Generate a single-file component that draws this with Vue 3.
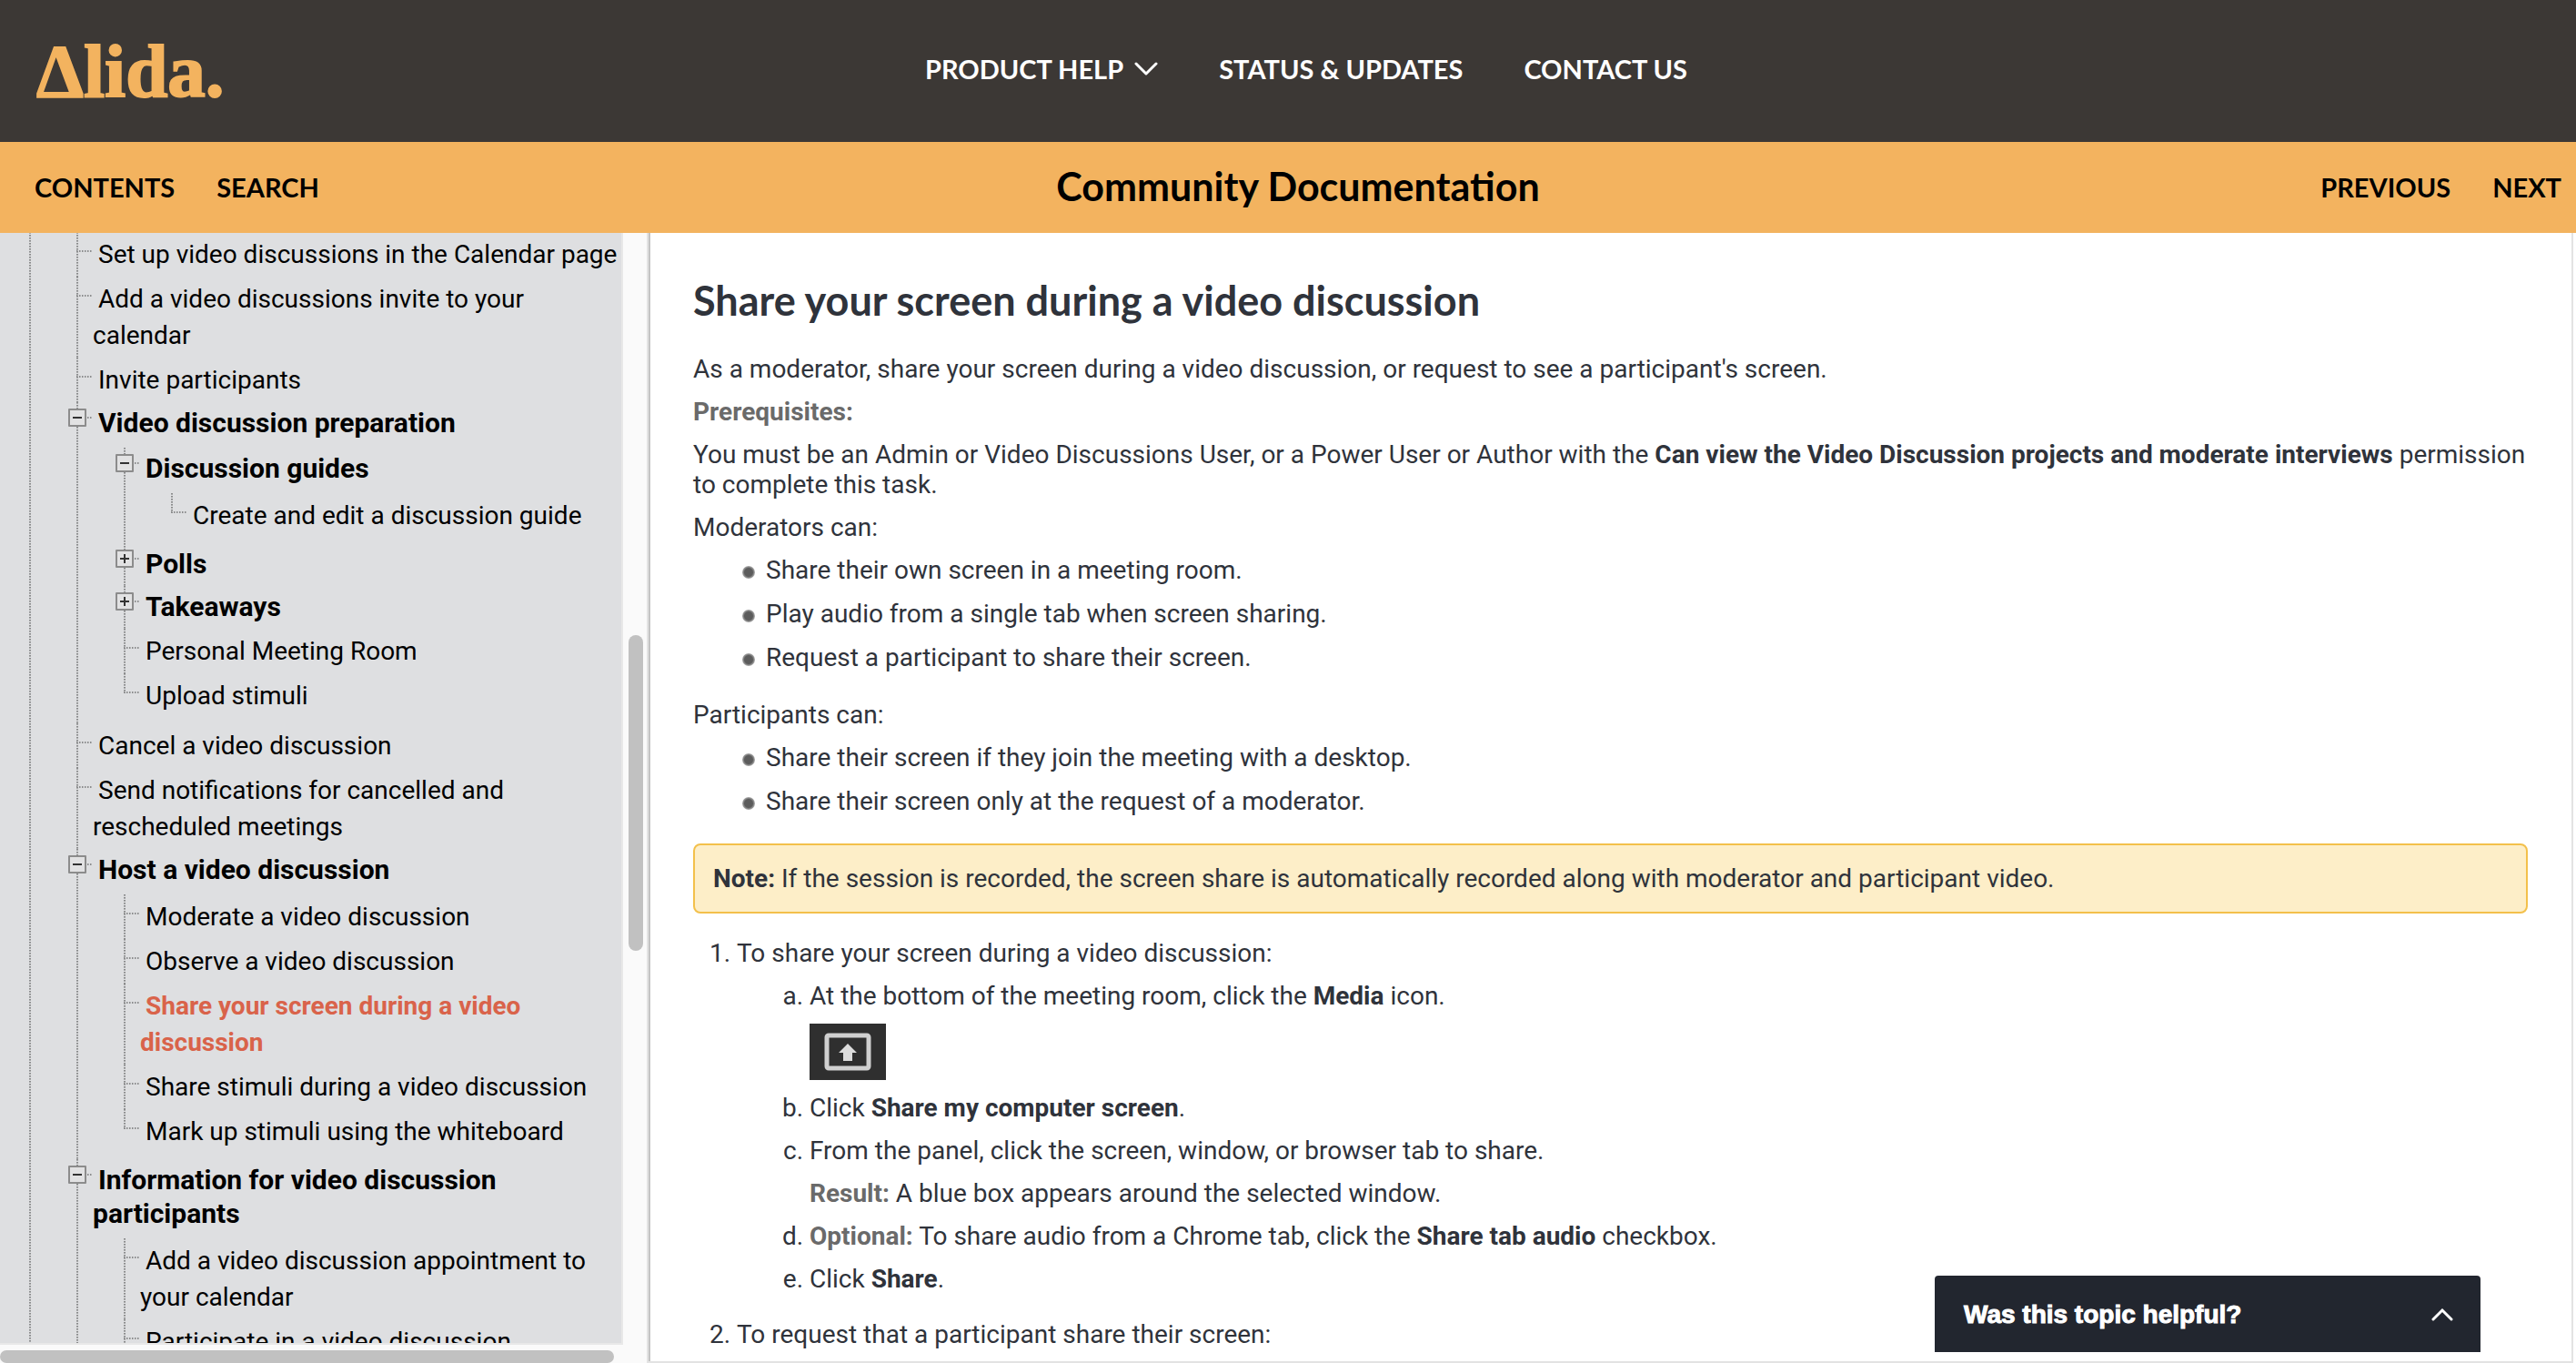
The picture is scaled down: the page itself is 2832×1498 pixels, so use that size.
<script setup>
import { ref } from 'vue'

const selected = ref('Share your screen during a video discussion')
const feedbackOpen = ref(false)

// Visible part of the contents tree: leaves are plain titles, folders carry children.
const tree = ref([
  { title: 'Set up video discussions in the Calendar page' },
  { title: 'Add a video discussions invite to your calendar' },
  { title: 'Invite participants' },
  {
    title: 'Video discussion preparation',
    open: true,
    children: [
      {
        title: 'Discussion guides',
        open: true,
        children: [{ title: 'Create and edit a discussion guide' }]
      },
      { title: 'Polls', open: false, children: [] },
      { title: 'Takeaways', open: false, children: [] },
      { title: 'Personal Meeting Room' },
      { title: 'Upload stimuli' }
    ]
  },
  { title: 'Cancel a video discussion' },
  { title: 'Send notifications for cancelled and rescheduled meetings' },
  {
    title: 'Host a video discussion',
    open: true,
    children: [
      { title: 'Moderate a video discussion' },
      { title: 'Observe a video discussion' },
      { title: 'Share your screen during a video discussion' },
      { title: 'Share stimuli during a video discussion' },
      { title: 'Mark up stimuli using the whiteboard' }
    ]
  },
  {
    title: 'Information for video discussion participants',
    open: true,
    more: true,
    children: [
      { title: 'Add a video discussion appointment to your calendar' },
      { title: 'Participate in a video discussion', more: true }
    ]
  }
])

const isLast = (list, index) => index === list.length - 1 && !list[index].more
</script>

<template>
  <div class="app">
    <header class="top">
      <a class="logo" href="#">Δlida.</a>
      <nav class="nav">
        <a href="#" class="nav-link">
          PRODUCT HELP
          <svg width="26" height="18" viewBox="0 0 26 18" aria-hidden="true">
            <path d="M2 3 L13 14 L24 3" fill="none" stroke="#fff" stroke-width="3" stroke-linecap="round" stroke-linejoin="round" />
          </svg>
        </a>
        <a href="#" class="nav-link">STATUS &amp; UPDATES</a>
        <a href="#" class="nav-link">CONTACT US</a>
      </nav>
    </header>

    <div class="bar">
      <div class="bar-group">
        <a href="#">CONTENTS</a>
        <a href="#">SEARCH</a>
      </div>
      <div class="bar-title">Community Documentation</div>
      <div class="bar-group end">
        <a href="#">PREVIOUS</a>
        <a href="#">NEXT</a>
      </div>
    </div>

    <div class="body">
      <aside class="sidebar">
        <div class="tree">
          <ul class="root">
            <li class="node trunk">
              <ul class="first">
                <li v-for="(a, i) in tree" :key="a.title" class="node" :class="{ last: isLast(tree, i), folder: a.children }">
                  <button v-if="a.children" class="toggle" :class="{ plus: !a.open }" :aria-label="a.title" @click="a.open = !a.open"></button>
                  <a href="#" class="label" :class="{ current: a.title === selected }" @click.prevent="selected = a.title">{{ a.title }}</a>
                  <ul v-if="a.children && a.open && a.children.length">
                    <li v-for="(b, j) in a.children" :key="b.title" class="node" :class="{ last: isLast(a.children, j), folder: b.children }">
                      <button v-if="b.children" class="toggle" :class="{ plus: !b.open }" :aria-label="b.title" @click="b.open = !b.open"></button>
                      <a href="#" class="label" :class="{ current: b.title === selected }" @click.prevent="selected = b.title">{{ b.title }}</a>
                      <ul v-if="b.children && b.open && b.children.length">
                        <li v-for="(c, k) in b.children" :key="c.title" class="node" :class="{ last: isLast(b.children, k) }">
                          <a href="#" class="label" :class="{ current: c.title === selected }" @click.prevent="selected = c.title">{{ c.title }}</a>
                        </li>
                      </ul>
                    </li>
                  </ul>
                </li>
              </ul>
            </li>
          </ul>
        </div>
        <div class="track-y"><span class="thumb-y"></span></div>
        <div class="track-x"><span class="thumb-x"></span></div>
      </aside>

      <main class="pane">
        <article class="topic">
          <h1>Share your screen during a video discussion</h1>
          <p>As a moderator, share your screen during a video discussion, or request to see a participant's screen.</p>
          <p><b class="tag">Prerequisites:</b></p>
          <p>You must be an Admin or Video Discussions User, or a Power User or Author with the <b>Can view the Video Discussion projects and moderate interviews</b> permission to complete this task.</p>
          <p>Moderators can:</p>
          <ul class="bullets">
            <li>Share their own screen in a meeting room.</li>
            <li>Play audio from a single tab when screen sharing.</li>
            <li>Request a participant to share their screen.</li>
          </ul>
          <p>Participants can:</p>
          <ul class="bullets">
            <li>Share their screen if they join the meeting with a desktop.</li>
            <li>Share their screen only at the request of a moderator.</li>
          </ul>
          <div class="note"><b>Note:</b> If the session is recorded, the screen share is automatically recorded along with moderator and participant video.</div>
          <ol class="steps">
            <li>
              <p>To share your screen during a video discussion:</p>
              <ol class="substeps">
                <li>
                  <p>At the bottom of the meeting room, click the <b>Media</b> icon.</p>
                  <svg class="media" width="84" height="62" viewBox="0 0 84 62" role="img" aria-label="Media">
                    <rect width="84" height="62" fill="#2f2f2f" />
                    <rect x="19" y="13" width="46" height="36" rx="2" fill="none" stroke="#d0d0d0" stroke-width="5" />
                    <path d="M42 22 L52 32 H47 V41 H37 V32 H32 Z" fill="#dcdcdc" />
                  </svg>
                </li>
                <li><p>Click <b>Share my computer screen</b>.</p></li>
                <li>
                  <p>From the panel, click the screen, window, or browser tab to share.</p>
                  <p><b class="tag">Result:</b> A blue box appears around the selected window.</p>
                </li>
                <li><p><b class="tag">Optional:</b> To share audio from a Chrome tab, click the <b>Share tab audio</b> checkbox.</p></li>
                <li><p>Click <b>Share</b>.</p></li>
              </ol>
            </li>
            <li><p>To request that a participant share their screen:</p></li>
          </ol>
        </article>
        <button class="feedback" :aria-expanded="feedbackOpen" @click="feedbackOpen = !feedbackOpen">
          Was this topic helpful?
          <svg width="24" height="16" viewBox="0 0 24 16" aria-hidden="true">
            <path d="M2 13 L12 3 L22 13" fill="none" stroke="#fff" stroke-width="3" stroke-linecap="round" />
          </svg>
        </button>
      </main>
    </div>
  </div>
</template>

<style>
body {
  margin: 0;
  background: #fff;
}
</style>

<style scoped>
.app {
  display: flex;
  flex-direction: column;
  height: 100vh;
  overflow: hidden;
  font-family: Roboto, 'Liberation Sans', sans-serif;
  font-size: 28px;
  line-height: 33px;
  color: #2f333b;
}
a {
  color: inherit;
  text-decoration: none;
}
ul,
ol {
  margin: 0;
  padding: 0;
}

/* Header */
.top {
  flex: none;
  display: grid;
  grid-template-columns: 1fr auto 1fr;
  align-items: center;
  height: 156px;
  padding-left: 40px;
  background: #3c3835;
}
.logo {
  font-family: 'Liberation Serif', serif;
  font-size: 83px;
  line-height: 92px;
  font-weight: 700;
  color: #f3b35f;
  -webkit-text-stroke: 2px #f3b35f;
}
.nav {
  display: flex;
  gap: 67px;
  padding-bottom: 4px;
}
.nav-link {
  display: flex;
  align-items: center;
  gap: 12px;
  font-family: Lato, sans-serif;
  font-size: 29px;
  line-height: 36px;
  font-weight: 700;
  color: #fff;
}
.bar {
  flex: none;
  box-sizing: border-box;
  display: grid;
  grid-template-columns: 1fr auto 1fr;
  align-items: center;
  height: 100px;
  padding: 0 16px 2px 38px;
  background: #f3b35f;
  color: #000;
  font-family: Lato, sans-serif;
  font-size: 29px;
  font-weight: 700;
}
.bar-group {
  display: flex;
  gap: 46px;
}
.end {
  justify-content: flex-end;
}
.bar-title {
  font-size: 43px;
  line-height: 52px;
}

/* Sidebar */
.body {
  flex: 1;
  min-height: 0;
  display: flex;
}
.sidebar {
  flex: none;
  width: 711px;
  display: grid;
  grid-template-columns: 1fr 26px;
  grid-template-rows: minmax(0, 1fr) 20px;
  background: #fafafa;
}
.tree {
  overflow: hidden;
  background: #dedfe1;
  border-right: 2px solid #e8e8e8;
  border-bottom: 2px solid #e8e8e8;
  color: #000;
}
.tree ul {
  list-style: none;
  margin: 3px 0 0 34px;
  padding-bottom: 6px;
}
.tree .root {
  margin: -1px 0 0 32px;
}
.tree .first {
  margin-top: 0;
}
.node {
  position: relative;
  padding-left: 18px;
  background-image:
    repeating-linear-gradient(to bottom, #8a8b8c 0 1px, #a9aaab 1px 2px, transparent 2px 3px),
    repeating-linear-gradient(to right, #8a8b8c 0 1px, #b4b5b6 1px 2px, transparent 2px 3px);
  background-size: 2px 100%, 17px 2px;
  background-position: 0 0, 0 20px;
  background-repeat: no-repeat;
}
.folder {
  background-position: 0 0, 0 16px;
}
.last {
  background-size: 2px 22px, 17px 2px;
}
.trunk {
  background-size: 2px 100%, 0 0;
}
.label {
  display: block;
  padding: 5px 4px 4px 0;
  line-height: 40px;
  text-indent: 6px;
}
.folder > .label {
  padding: 4px 4px 6px 0;
  font-size: 30px;
  line-height: 37px;
  font-weight: 700;
}
.current {
  font-weight: 700;
  color: #d9634a;
}
.toggle {
  position: absolute;
  left: -9px;
  top: 7px;
  width: 20px;
  height: 20px;
  padding: 0;
  border: 2px solid #8c8c8c;
  border-radius: 1px;
  background: linear-gradient(#333, #333) center / 10px 2px no-repeat #e2e2e3;
}
.plus {
  background:
    linear-gradient(#333, #333) center / 10px 2px no-repeat,
    linear-gradient(#333, #333) center / 2px 10px no-repeat #e2e2e3;
}
.track-y {
  display: flex;
  flex-direction: column;
  align-items: center;
}
.track-y::before {
  content: '';
  flex: 442;
}
.track-y::after {
  content: '';
  flex: 433;
}
.thumb-y {
  flex: 347;
  width: 16px;
  margin-left: 2px;
  border-radius: 8px;
  background: #c1c1c1;
}
.track-x {
  grid-column: 1 / -1;
  display: flex;
  align-items: flex-end;
}
.thumb-x {
  width: 95%;
  height: 14px;
  border-radius: 8px;
  background: #c1c1c1;
}

/* Topic */
.pane {
  flex: 1;
  min-width: 0;
  position: relative;
  box-sizing: border-box;
  margin-right: 3px;
  overflow: hidden;
  border: solid #e3e3e3;
  border-width: 0 2px 2px 2px;
}
.topic {
  box-sizing: border-box;
  min-height: 100%;
  padding: 47px 48px 0 47px;
  border-left: 2px solid #c4c4c4;
}
h1 {
  margin: 0 0 32px;
  font-family: Lato, sans-serif;
  font-size: 45px;
  line-height: 54px;
  font-weight: 700;
}
p {
  margin: 0 0 14px;
}
.tag {
  color: #6a6a6a;
}
.bullets {
  list-style: none;
  padding: 0 0 15px 54px;
}
.bullets li {
  display: flex;
  align-items: center;
  gap: 12px;
  margin-bottom: 15px;
}
.bullets li::before {
  content: '';
  width: 14px;
  height: 14px;
  margin-top: 5px;
  border-radius: 50%;
  background: radial-gradient(circle, #5c5c5c 45%, #b5b5b5 72%);
}
.note {
  margin-bottom: 27px;
  padding: 20px;
  border: 2px solid #f3c04b;
  border-radius: 8px;
  background: #fdeec8;
}
.steps {
  padding-left: 48px;
}
.steps > li {
  margin-bottom: 28px;
}
.substeps {
  list-style-type: lower-alpha;
  padding-left: 80px;
}
.media {
  display: block;
  margin-bottom: 14px;
}
.feedback {
  position: absolute;
  right: 100px;
  bottom: 10px;
  box-sizing: border-box;
  width: 600px;
  height: 84px;
  display: flex;
  align-items: center;
  justify-content: space-between;
  padding: 2px 30px 0 32px;
  border: 0;
  border-radius: 4px 4px 0 0;
  background: #22262f;
  color: #fff;
  font-family: 'Liberation Sans', Arial, sans-serif;
  font-size: 28px;
  font-weight: 700;
  -webkit-text-stroke: 1px #fff;
}
</style>
